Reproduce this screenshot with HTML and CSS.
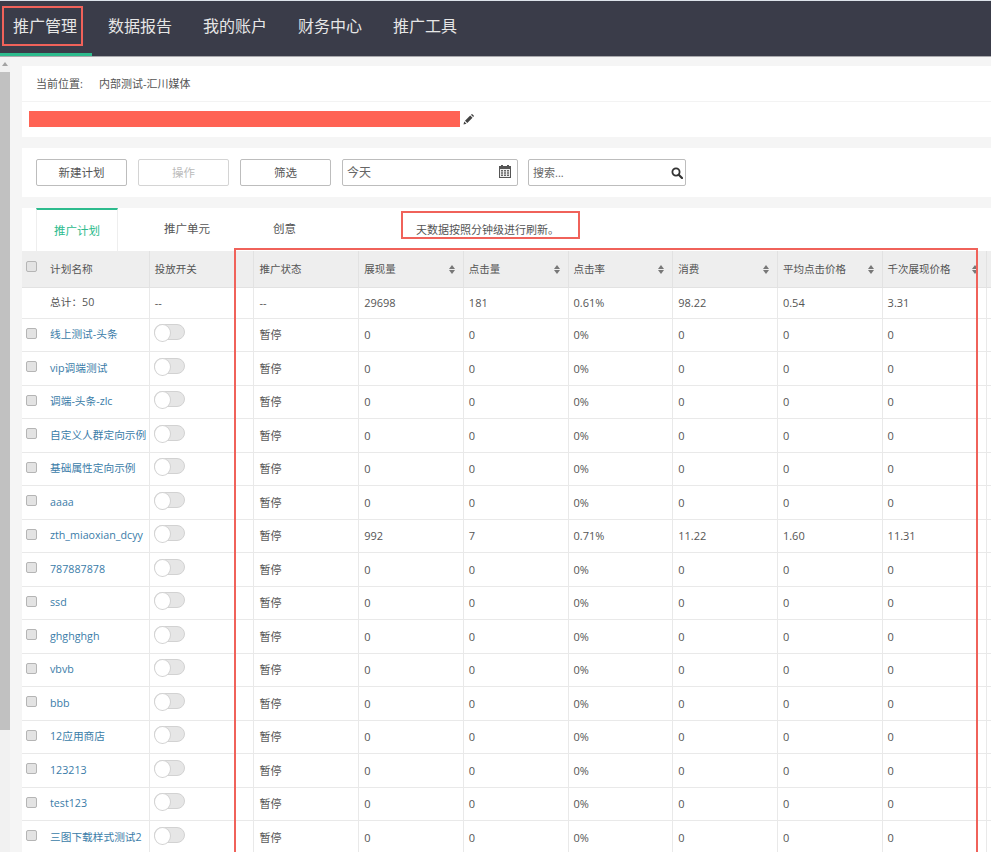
FILE: index.html
```html
<!DOCTYPE html>
<html lang="zh-CN">
<head>
<meta charset="utf-8">
<title>推广管理</title>
<link rel="stylesheet" href="styles.css">
</head>
<body>
<nav class="nav">
  <a class="nav-item active">推广管理</a>
  <a class="nav-item">数据报告</a>
  <a class="nav-item">我的账户</a>
  <a class="nav-item">财务中心</a>
  <a class="nav-item">推广工具</a>
  <span class="mark mark-nav"></span>
</nav>
<div class="main">
  <div class="scrollbar"><div class="scroll-up"></div><div class="scroll-thumb"></div></div>
  <div class="content">
    <section class="crumb-panel">
      <div class="crumb"><span class="crumb-label">当前位置:</span><span>内部测试-汇川媒体</span></div>
      <div class="title-row">
        <span class="redacted"></span>
        <svg class="pencil" width="11" height="11" viewBox="0 0 11 11"><path fill="#444" d="M0.5 10.5l0.7-3 2.3 2.3zM2 6.7L7.2 1.5l2.3 2.3L4.3 9zM7.9 0.8l0.6-0.5c0.3-0.2 0.6-0.2 0.9 0l1.3 1.3c0.2 0.3 0.2 0.6 0 0.9l-0.5 0.6z"/></svg>
      </div>
    </section>
    <section class="toolbar">
      <button class="btn">新建计划</button>
      <button class="btn disabled">操作</button>
      <button class="btn">筛选</button>
      <div class="field date"><span>今天</span>
        <svg class="cal" width="14" height="14" viewBox="0 0 14 14"><path fill="#555" d="M1 2h2V1h2v1h4V1h2v1h2v12H1z"/><path fill="#eee" d="M2 5h10v8H2z"/><path fill="#666" d="M3 6h2v1.500H3zM6 6h2v1.500H6zM9 6h2v1.500H9zM3 8.200h2v1.500H3zM6 8.200h2v1.500H6zM9 8.200h2v1.500H9zM3 10.500h2V12H3zM6 10.500h2V12H6zM9 10.500h2V12H9z"/></svg>
      </div>
      <div class="field search"><span>搜索...</span>
        <svg width="12" height="12" viewBox="0 0 12 12"><circle cx="5" cy="5" r="3.600" fill="none" stroke="#333" stroke-width="1.800"/><path d="M7.700 7.700L11 11" stroke="#333" stroke-width="2.200" stroke-linecap="round"/></svg>
      </div>
    </section>
    <section class="tabs-panel">
      <a class="tab current">推广计划</a>
      <a class="tab">推广单元</a>
      <a class="tab">创意</a>
      <div class="notice">天数据按照分钟级进行刷新。</div>
    </section>
    <table class="grid">
      <colgroup><col class="c-name"><col class="c-std"><col class="c-std"><col class="c-std"><col class="c-std"><col class="c-std"><col class="c-std"><col class="c-std"><col class="c-std"><col class="c-last"></colgroup>
      <thead>
        <tr>
          <th class="first"><span class="check"></span>计划名称</th>
          <th>投放开关</th>
          <th>推广状态</th>
          <th><div class="sort-cell">展现量<span class="sort"></span></div></th>
          <th><div class="sort-cell">点击量<span class="sort"></span></div></th>
          <th><div class="sort-cell">点击率<span class="sort"></span></div></th>
          <th><div class="sort-cell">消费<span class="sort"></span></div></th>
          <th><div class="sort-cell">平均点击价格<span class="sort"></span></div></th>
          <th><div class="sort-cell">千次展现价格<span class="sort"></span></div></th>
          <th></th>
        </tr>
      </thead>
      <tbody>
        <tr class="total"><td class="first">总计：50</td><td>--</td><td>--</td><td>29698</td><td>181</td><td>0.61%</td><td>98.22</td><td>0.54</td><td>3.31</td><td></td></tr>
        <tr><td class="first"><span class="check"></span><a>线上测试-头条</a></td><td><span class="toggle"></span></td><td>暂停</td><td>0</td><td>0</td><td>0%</td><td>0</td><td>0</td><td>0</td><td></td></tr>
        <tr><td class="first"><span class="check"></span><a>vip调端测试</a></td><td><span class="toggle"></span></td><td>暂停</td><td>0</td><td>0</td><td>0%</td><td>0</td><td>0</td><td>0</td><td></td></tr>
        <tr><td class="first"><span class="check"></span><a>调端-头条-zlc</a></td><td><span class="toggle"></span></td><td>暂停</td><td>0</td><td>0</td><td>0%</td><td>0</td><td>0</td><td>0</td><td></td></tr>
        <tr><td class="first"><span class="check"></span><a>自定义人群定向示例</a></td><td><span class="toggle"></span></td><td>暂停</td><td>0</td><td>0</td><td>0%</td><td>0</td><td>0</td><td>0</td><td></td></tr>
        <tr><td class="first"><span class="check"></span><a>基础属性定向示例</a></td><td><span class="toggle"></span></td><td>暂停</td><td>0</td><td>0</td><td>0%</td><td>0</td><td>0</td><td>0</td><td></td></tr>
        <tr><td class="first"><span class="check"></span><a>aaaa</a></td><td><span class="toggle"></span></td><td>暂停</td><td>0</td><td>0</td><td>0%</td><td>0</td><td>0</td><td>0</td><td></td></tr>
        <tr><td class="first"><span class="check"></span><a>zth_miaoxian_dcyy</a></td><td><span class="toggle"></span></td><td>暂停</td><td>992</td><td>7</td><td>0.71%</td><td>11.22</td><td>1.60</td><td>11.31</td><td></td></tr>
        <tr><td class="first"><span class="check"></span><a>787887878</a></td><td><span class="toggle"></span></td><td>暂停</td><td>0</td><td>0</td><td>0%</td><td>0</td><td>0</td><td>0</td><td></td></tr>
        <tr><td class="first"><span class="check"></span><a>ssd</a></td><td><span class="toggle"></span></td><td>暂停</td><td>0</td><td>0</td><td>0%</td><td>0</td><td>0</td><td>0</td><td></td></tr>
        <tr><td class="first"><span class="check"></span><a>ghghghgh</a></td><td><span class="toggle"></span></td><td>暂停</td><td>0</td><td>0</td><td>0%</td><td>0</td><td>0</td><td>0</td><td></td></tr>
        <tr><td class="first"><span class="check"></span><a>vbvb</a></td><td><span class="toggle"></span></td><td>暂停</td><td>0</td><td>0</td><td>0%</td><td>0</td><td>0</td><td>0</td><td></td></tr>
        <tr><td class="first"><span class="check"></span><a>bbb</a></td><td><span class="toggle"></span></td><td>暂停</td><td>0</td><td>0</td><td>0%</td><td>0</td><td>0</td><td>0</td><td></td></tr>
        <tr><td class="first"><span class="check"></span><a>12应用商店</a></td><td><span class="toggle"></span></td><td>暂停</td><td>0</td><td>0</td><td>0%</td><td>0</td><td>0</td><td>0</td><td></td></tr>
        <tr><td class="first"><span class="check"></span><a>123213</a></td><td><span class="toggle"></span></td><td>暂停</td><td>0</td><td>0</td><td>0%</td><td>0</td><td>0</td><td>0</td><td></td></tr>
        <tr><td class="first"><span class="check"></span><a>test123</a></td><td><span class="toggle"></span></td><td>暂停</td><td>0</td><td>0</td><td>0%</td><td>0</td><td>0</td><td>0</td><td></td></tr>
        <tr><td class="first"><span class="check"></span><a>三图下载样式测试2</a></td><td><span class="toggle"></span></td><td>暂停</td><td>0</td><td>0</td><td>0%</td><td>0</td><td>0</td><td>0</td><td></td></tr>
      </tbody>
    </table>
  </div>
</div>
<span class="mark mark-table"></span>
</body>
</html>
```
FILE: styles.css
```css
* { box-sizing: border-box; }
html, body { margin: 0; height: 100%; }
body {
  position: relative;
  height: 852px;
  overflow: hidden;
  background: #f5f5f5;
  color: #555;
  font: 11px/1.4 "Open Sans", "Noto Sans CJK SC", sans-serif;
}

/* top navigation */
.nav {
  position: relative;
  display: flex;
  gap: 3px;
  height: 57px;
  background: #3a3c49;
  border-top: 1px solid #dde3ea;
  border-bottom: 1px solid #a9a9ad;
}
.nav-item {
  display: flex;
  align-items: center;
  width: 92px;
  height: 55px;
  padding: 0 0 4px 13px;
  color: #e6e6e6;
  font-size: 16px;
  white-space: nowrap;
}
.nav-item.active { border-bottom: 3px solid #2dbb8d; padding-bottom: 1px; }

/* annotation marks */
.mark { position: absolute; border: 2px solid #f0625a; pointer-events: none; }
.mark-nav { left: 2px; top: 5px; width: 81px; height: 40px; }
.mark-table { left: 234px; top: 248px; width: 744px; height: 640px; }

/* page body */
.main { display: flex; height: 795px; }
.scrollbar { width: 10px; flex: none; background: #f1f1f1; }
.scroll-up { height: 15px; position: relative; }
.scroll-up::before {
  content: "";
  position: absolute;
  left: 2px;
  top: 5px;
  border: 3px solid transparent;
  border-top: 0;
  border-bottom: 4px solid #a3a3a3;
}
.scroll-thumb { height: 658px; background: #c1c1c1; }
.content { flex: 1; min-width: 0; padding: 9px 0 0 12px; overflow: hidden; }

.crumb-panel { background: #fff; }
.crumb {
  display: flex;
  align-items: center;
  height: 36px;
  padding: 0 0 0 14px;
  border-bottom: 1px solid #f3f3f3;
}
.crumb-label { width: 63px; }
.title-row { display: flex; align-items: center; gap: 3px; height: 35px; padding: 0 0 2px 7px; }
.redacted { width: 431px; height: 16px; background: #ff6354; }
.pencil { flex: none; margin-top: 2px; }

.toolbar {
  display: flex;
  gap: 11px;
  height: 49px;
  margin-top: 11px;
  padding: 11px 0 0 14px;
  background: #fff;
}
.btn {
  width: 91px;
  height: 27px;
  padding: 1px 0 0;
  background: #fff;
  border: 1px solid #bdbdbd;
  border-radius: 2px;
  color: #555;
  font: inherit;
  font-size: 11.5px;
}
.btn.disabled { color: #bbb; border-color: #d4d4d4; }
.field {
  display: flex;
  align-items: center;
  justify-content: space-between;
  height: 27px;
  padding: 1px 5px 0 4px;
  border: 1px solid #bdbdbd;
  border-radius: 2px;
  color: #666;
}
.date { width: 176px; font-size: 12px; }
.cal { margin-bottom: 4px; }
.search { width: 158px; padding-right: 2px; margin-left: -1px; }

.tabs-panel {
  display: flex;
  gap: 27px;
  height: 43px;
  margin-top: 11px;
  padding-left: 14px;
  background: #fff;
}
.tab {
  display: flex;
  align-items: center;
  justify-content: center;
  padding: 0 18px 1px;
  color: #555;
  font-size: 11.5px;
  white-space: nowrap;
}
.tab.current {
  width: 82px;
  margin-right: 1px;
  padding: 1px 0 0;
  color: #2dbb8d;
  border-top: 2px solid #2dbb8d;
  border-left: 1px solid #eee;
  border-right: 1px solid #eee;
}
.notice {
  align-self: flex-start;
  width: 179px;
  height: 28px;
  margin: 3px 0 0 60px;
  padding: 9px 0 0 13px;
  border: 2px solid #f0625a;
  white-space: nowrap;
  line-height: 15px;
}

/* data table */
.grid { table-layout: fixed; width: 1065px; border-collapse: collapse; background: #fff; }
.c-name { width: 127.3px; }
.c-std { width: 104.7px; }
.c-last { width: 100px; }
.grid th, .grid td {
  padding: 0 5px;
  border: 1px solid #e9e9e9;
  border-width: 0 1px 1px 0;
  text-align: left;
  font-weight: 400;
  white-space: nowrap;
  overflow: hidden;
}
.grid th {
  height: 36px;
  padding-top: 2px;
  background: #eee;
  border-color: #e2e2e2;
  color: #555;
  font-size: 10.5px;
}
.grid .total td { height: 31px; }
.grid td { height: 33.5px; }
.grid .first { position: relative; padding-left: 28px; font-size: 10.7px; }
.grid a { color: #3a7ca8; }
.check {
  position: absolute;
  left: 4px;
  top: 9px;
  width: 11px;
  height: 11px;
  background: #e3e3e3;
  border: 1px solid #b5b5b5;
  border-radius: 2px;
}
.grid th .check { top: 10px; }
.toggle {
  display: block;
  position: relative;
  width: 31px;
  height: 16px;
  margin: -5px 0 0 -1px;
  background: #e6e6e6;
  border: 1px solid #d2d2d2;
  border-radius: 8px;
}
.toggle::before {
  content: "";
  position: absolute;
  left: -1px;
  top: -1px;
  width: 15px;
  height: 16px;
  background: #fff;
  border: 1px solid #d2d2d2;
  border-radius: 50%;
}
.sort-cell { display: flex; justify-content: space-between; align-items: center; padding-right: 3px; }
.sort { display: flex; flex-direction: column; gap: 1px; flex: none; }
.sort::before, .sort::after { content: ""; border: 3.5px solid transparent; }
.sort::before { border-top: 0; border-bottom: 4px solid #777; }
.sort::after { border-bottom: 0; border-top: 4px solid #777; }
```
